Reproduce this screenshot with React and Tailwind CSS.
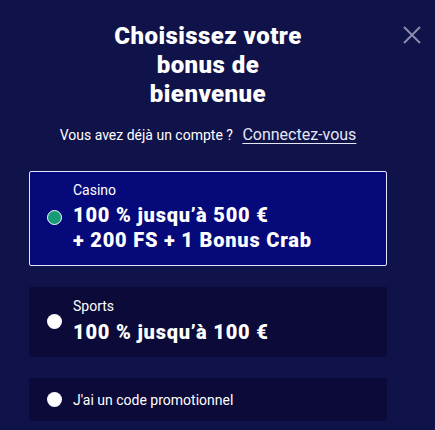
import React from "react";

const options = [
  { id: "casino", label: "Casino", lines: ["100 % jusqu’à 500 €", "+ 200 FS + 1 Bonus Crab"] },
  { id: "sports", label: "Sports", lines: ["100 % jusqu’à 100 €"] },
];

const Radio = ({ checked }) => (
  <span
    className={
      checked
        ? "w-[15px] h-[15px] rounded-full shrink-0 bg-[#169c76] border-[1.5px] border-white"
        : "w-[15px] h-[15px] rounded-full shrink-0 bg-white"
    }
  />
);

export default function App() {
  const selected = "casino";

  return (
    <div
      className="relative w-[435px] h-[430px] overflow-hidden bg-[#10124a] text-white"
      style={{ fontFamily: "Roboto, 'Liberation Sans', sans-serif" }}
    >
      {/* Close */}
      <button className="absolute top-[26px] left-[403px] w-[18px] h-[18px]">
        <svg viewBox="0 0 18 18" width="18" height="18" fill="none" stroke="#8b8cab" strokeWidth="2">
          <path d="M1 1 L17 17 M17 1 L1 17" />
        </svg>
      </button>

      <div className="ml-[29px] w-[358px] pt-[22px]">
        <h2 className="text-center text-[24px] leading-[29px] font-black tracking-[0.45px]">
          <span className="block">Choisissez votre</span>
          <span className="block">bonus de</span>
          <span className="block">bienvenue</span>
        </h2>

        <p className="mt-[16px] text-center text-[14px] leading-[20px]">
          Vous avez déjà un compte ?{" "}
          <a className="ml-[6px] text-[16px] underline underline-offset-[3px] text-[#e6e7f5]">Connectez-vous</a>
        </p>

        <div className="mt-[26px] flex flex-col gap-[21px]">
          {options.map((o) => {
            const active = o.id === selected;
            return (
              <div
                key={o.id}
                className={
                  active
                    ? "flex items-center gap-[11px] pl-[17px] pr-3 pt-[9px] pb-[12px] rounded-[2px] border border-[#e4e6ff] bg-[#06097a]"
                    : "flex items-center gap-[11px] pl-[18px] pr-3 pt-[10px] pb-[12px] rounded-[2px] bg-[#0b0a38]"
                }
              >
                <Radio checked={active} />
                <div>
                  <div className="text-[14px] leading-[18px]">{o.label}</div>
                  <div
                    className={
                      active
                        ? "mt-[4px] text-[20px] leading-[25px] font-black tracking-[0.8px]"
                        : "mt-[5px] text-[20px] leading-[25px] font-black tracking-[0.8px]"
                    }
                  >
                    {o.lines.map((l) => (
                      <div key={l}>{l}</div>
                    ))}
                  </div>
                </div>
              </div>
            );
          })}

          {/* Promo code */}
          <div className="flex items-center gap-[11px] pl-[18px] pr-3 h-[43px] rounded-[2px] bg-[#0b0a38]">
            <Radio checked={false} />
            <span className="text-[14px] leading-[18px]">J'ai un code promotionnel</span>
          </div>
        </div>
      </div>
    </div>
  );
}
